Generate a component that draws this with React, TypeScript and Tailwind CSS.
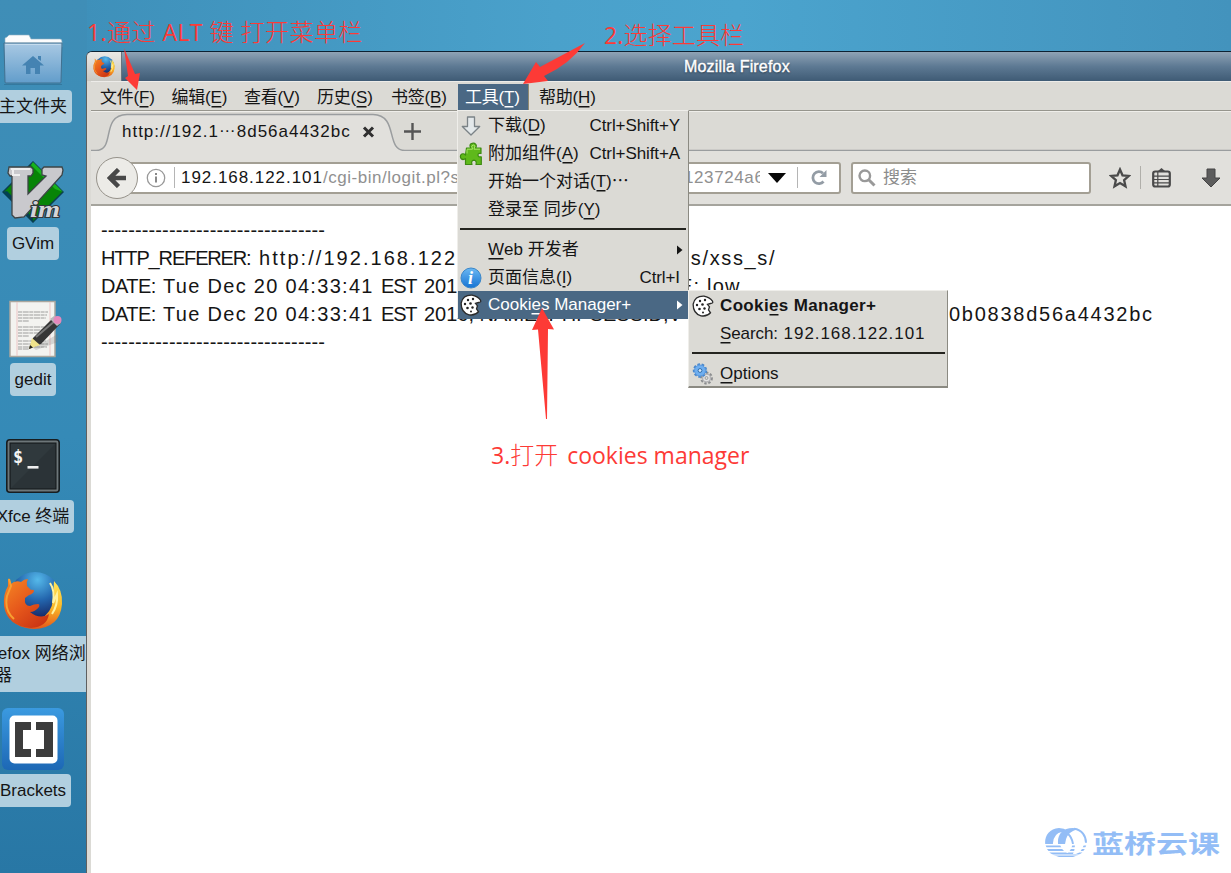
import React from "react";

const UI = "font-['Liberation_Sans','Noto_Sans_CJK_SC',sans-serif]";

/* ---------- drawings ---------- */

function FolderIcon() {
  return (
    <svg width="60" height="52" viewBox="0 0 60 52">
      <defs>
        <linearGradient id="folder" x1="0" y1="0" x2="0" y2="1">
          <stop offset="0" stopColor="#a9c9e3" />
          <stop offset="1" stopColor="#629dcb" />
        </linearGradient>
      </defs>
      <path d="M2 10V4l2-1 2-2h20l2 4h29q2 0 2 3v5z" fill="#fcfcfc" stroke="#8fb0c4" strokeWidth=".6" />
      <path d="M1 9h58l-1 39q0 1-1 1H3q-1 0-1-1z" fill="url(#folder)" stroke="#41708f" />
      <path d="M2.500 10.500h55" stroke="#c5dced" />
      <path d="M1 50.500h58" stroke="#2b6485" strokeOpacity=".5" />
      <path d="M30 22l11 9.500h-4V40h-5v-6h-4.500v6H23v-8.500h-4z M35 22h3v5l-3-2z" fill="#4583b2" />
    </svg>
  );
}

function VimIcon() {
  return (
    <svg width="62" height="62" viewBox="0 0 62 62">
      <path d="M31 1l30 30-30 30L1 31z" fill="#078407" stroke="#0b3f51" strokeWidth="1.500" />
      <path d="M31 1l30 30-8-3-24-24z" fill="#18b21d" />
      <path d="M1 31l30 30v-4L5 30z" fill="#034052" />
      <path d="M7 6h22l2 2v4l-2 3h-3v18l18-18-4-1v-6l2-2h18l1 3-1 5-38 42-9 1-3-3V15H8l-2-3z" fill="#c9c9cd" stroke="#3d4446" strokeWidth="1.300" />
      <path d="M9 8h19M11 9v5h7" stroke="#efeff0" strokeWidth="2" fill="none" />
      <text x="28" y="56" fontFamily="Liberation Serif, serif" fontStyle="italic" fontWeight="bold" fontSize="24" textLength="30" lengthAdjust="spacingAndGlyphs" fill="#d4d4d8" stroke="#30383b" strokeWidth="2.200" paintOrder="stroke">im</text>
    </svg>
  );
}

function GeditIcon() {
  const lines = [12, 15, 18, 21, 27, 30, 33, 36, 41, 44, 47, 49];
  return (
    <svg width="56" height="58" viewBox="0 0 56 58" className="translate-x-[2px]">
      <rect x="3" y="1.500" width="45" height="55" fill="#f3f3f0" stroke="#aaa79e" strokeWidth="1.500" />
      <path d="M10 2v54M43 2v54" stroke="#ecc5c5" />
      {lines.map((y, i) => (
        <path key={y} d={`M11 ${y}h${i % 4 === 3 ? 11 : 30 - (i % 3)}`} stroke="#9d9d9b" strokeWidth="1.200" strokeDasharray="4 .7 6 .6" />
      ))}
      <path d="M26 48l25-14v8l-22 8z" fill="#777" opacity=".25" />
      <path d="M22 49l4-11 21-21 7 6-20 21z" fill="#363636" />
      <path d="M29 37l20-17" stroke="#777" strokeWidth="2" />
      <path d="M22 49l3-11 8 7z" fill="#efe28b" />
      <path d="M22 49l1-4 3 2.500z" fill="#222" />
      <path d="M43 19l4-3 7 7-4 3z" fill="#b9b9bb" />
      <circle cx="50.500" cy="20" r="4" fill="#e489bd" />
    </svg>
  );
}

function TerminalIcon() {
  return (
    <svg width="54" height="54" viewBox="0 0 54 54">
      <rect x=".8" y=".8" width="52.400" height="52.400" rx="3" fill="#6d7679" stroke="#171d20" strokeWidth="1.600" />
      <rect x="4" y="4" width="46" height="46" fill="#2b3337" stroke="#14191b" />
      <path d="M5 49V5h44z" fill="#353f43" opacity=".5" />
      <text x="7" y="24" fontFamily="DejaVu Sans Mono, monospace" fontWeight="bold" fontSize="17" fill="#f4f4f4">$</text>
      <path d="M21.500 28.300h11" stroke="#eee" strokeWidth="2.600" />
    </svg>
  );
}

function FirefoxIcon({ size }: { size: number }) {
  return (
    <svg width={size} height={size} viewBox="0 0 60 60">
      <defs>
        <radialGradient id="globe" cx=".55" cy=".15" r=".8">
          <stop offset="0" stopColor="#55b9ea" />
          <stop offset=".5" stopColor="#2365ad" />
          <stop offset="1" stopColor="#141c57" />
        </radialGradient>
        <linearGradient id="fox" x1="0" y1="0" x2=".8" y2="1">
          <stop offset="0" stopColor="#f68a25" />
          <stop offset=".55" stopColor="#e5561b" />
          <stop offset="1" stopColor="#c93413" />
        </linearGradient>
        <linearGradient id="tail" x1="0" y1="0" x2="0" y2="1">
          <stop offset="0" stopColor="#ffe75c" />
          <stop offset=".55" stopColor="#fbb827" />
          <stop offset="1" stopColor="#e4571a" />
        </linearGradient>
      </defs>
      <circle cx="32" cy="27" r="26" fill="url(#globe)" />
      <path d="M51 10q9 9 8 23-2 24-28 25Q10 57 4 41q15 14 33 7 12-6 13-20z" fill="url(#tail)" />
      <path d="M47 12q5 7 3 20l4-9q1 11-5 20" stroke="#fff2a0" strokeWidth="2" fill="none" />
      <path d="M5 7l3 6q4-4 10-2 3-3 7-3-2 3-1 7l4 4q3-1 3 1-1 3-5 4l-4 3q-1 8 5 8 4-2 8-2 2 0 1 3-4 5-9 5 10 8 19 2-2 13-18 14Q4 55 1 35 0 23 5 15z" fill="url(#fox)" />
      <path d="M6 8l2 7-4 10q-3 14 7 23" stroke="#f7a031" strokeWidth="2" fill="none" />
    </svg>
  );
}

function BracketsIcon() {
  return (
    <svg width="64" height="64" viewBox="0 0 64 64">
      <defs>
        <linearGradient id="brk" x1="0" y1="0" x2="0" y2="1">
          <stop offset="0" stopColor="#3b9ae0" />
          <stop offset="1" stopColor="#1d68b5" />
        </linearGradient>
      </defs>
      <rect x="1" y="1" width="62" height="62" rx="6" fill="url(#brk)" />
      <rect x="8.500" y="8.500" width="48" height="48" rx="5" fill="#fff" />
      <path d="M14 15h16v8h-8v19h8v8H14zM35 15h17v35H35v-8h8V23h-8z" fill="#3c3c3c" />
    </svg>
  );
}

function Cookie() {
  return (
    <svg width="22" height="22" viewBox="0 0 22 22">
      <path d="M12 1.200Q3 .8 1.200 9 .8 18.500 9 20.800q6 1 9.500-3l-2-3 1-3-2-2.500 3-.8q3 0 2-2.300-3-4-8.500-5z" fill="#fff" stroke="#2b2b2b" strokeWidth="1.300" />
      <g fill="#222">
        <circle cx="8" cy="6" r="1.200" /><circle cx="13" cy="5" r="1.200" /><circle cx="5" cy="10" r="1.200" />
        <circle cx="10.500" cy="9.500" r="1.300" /><circle cx="7.500" cy="14" r="1.300" /><circle cx="12.500" cy="13.500" r="1.200" /><circle cx="11" cy="17.500" r="1" />
      </g>
    </svg>
  );
}

function DownloadArrow() {
  return (
    <svg width="22" height="22" viewBox="0 0 22 22">
      <path d="M7.500 2h7v9.500h5.200L11 20 2.300 11.500h5.200z" fill="#e3e8ea" stroke="#7b8387" strokeWidth="1.300" strokeLinejoin="round" />
    </svg>
  );
}

function Puzzle() {
  return (
    <svg width="24" height="24" viewBox="0 0 24 24">
      <path d="M7.500 6H12Q10 3.500 12 1.800q3-1.500 4.800.5Q18 4 16.500 6H22v5.500q-3-.7-3 1.500 0 2.500 3.300 1.800V22.500H17q1-4-2-4.300-3.300.3-2 4.300H6.500v-6q-2.500 2-4.500 0-1.500-3 .8-4.500 2-.8 3.700 1z" fill="#5fb91b" stroke="#3d8a12" strokeWidth="1.200" strokeLinejoin="round" />
      <path d="M8 7.200h5.500L12.700 4q1.500-2 3.300 0L15 7.200h6M8 7.500v4" stroke="#a8e566" fill="none" />
    </svg>
  );
}

function InfoIcon() {
  return (
    <svg width="22" height="22" viewBox="0 0 22 22">
      <defs>
        <linearGradient id="info" x1="0" y1="0" x2="0" y2="1">
          <stop offset="0" stopColor="#6bb8f2" />
          <stop offset="1" stopColor="#1573d4" />
        </linearGradient>
      </defs>
      <circle cx="11" cy="11" r="10" fill="url(#info)" stroke="#3b87c9" />
      <text x="8" y="17" fontFamily="Liberation Serif, serif" fontStyle="italic" fontWeight="bold" fontSize="18" fill="#fff">i</text>
    </svg>
  );
}

function Gears() {
  return (
    <svg width="22" height="22" viewBox="0 0 22 22">
      <circle cx="14.500" cy="15" r="4.800" fill="none" stroke="#8b8d8f" strokeWidth="3.200" strokeDasharray="2.100 1.500" />
      <circle cx="14.500" cy="15" r="4" fill="#e4e4e4" stroke="#b3b3b5" strokeWidth="1.500" />
      <circle cx="14.500" cy="15" r="1.500" fill="#dbdad5" stroke="#888" strokeWidth=".7" />
      <circle cx="8" cy="7.500" r="5.900" fill="none" stroke="#4a88cc" strokeWidth="2.600" strokeDasharray="2.500 1.600" />
      <circle cx="8" cy="7.500" r="5.500" fill="#6faff0" stroke="#5a98dd" />
      <circle cx="8" cy="7.500" r="1.900" fill="#dceaf8" stroke="#2e6cab" />
    </svg>
  );
}

/* ---------- desktop ---------- */

function Shortcut({ place, label, wide, children }: { place: string; label: string; wide?: string; children: React.ReactNode }) {
  return (
    <div className={`absolute flex w-[200px] flex-col items-center ${place}`}>
      {children}
      <span className={`${wide ?? "whitespace-nowrap rounded-[4px] px-[5px] leading-[33px]"} bg-[#b1cfdf] text-[#151515]`}>{label}</span>
    </div>
  );
}

/* ---------- menus ---------- */

function Key({ c }: { c: string }) {
  return <span className="inline-block leading-[17px] shadow-[0_2px_0_-0.5px_currentColor]">{c}</span>;
}

function Row({ icon, shortcut, active, arrow, className = "", children }: { icon?: React.ReactNode; shortcut?: string; active?: boolean; arrow?: boolean; className?: string; children: React.ReactNode }) {
  return (
    <div className={`flex h-7 items-center whitespace-pre pr-[8px] ${active ? "bg-[#4a6884] text-white" : "text-[#151515]"} ${className}`}>
      <span className="flex w-[30px] shrink-0 items-center pl-[2px]">{icon}</span>
      <span className="grow">{children}</span>
      {shortcut && <span className="tracking-[-0.1px]">{shortcut}</span>}
      {arrow && (
        <svg width="7" height="10" viewBox="0 0 7 10" className="mr-[-4px]">
          <path d="M0 .5L5.500 5 0 9.500z" fill="currentColor" />
        </svg>
      )}
    </div>
  );
}

function ToolsMenu() {
  return (
    <div className="absolute left-[457px] top-[110px] h-[209px] w-[232px] border border-l-[#efeeea] border-t-[#efeeea] border-r-[#8b8a82] border-b-[#8b8a82] bg-[#dbdad5] pt-[1px]">
      <Row icon={<DownloadArrow />} shortcut="Ctrl+Shift+Y">下载(<Key c="D" />)</Row>
      <Row icon={<span className="-ml-px"><Puzzle /></span>} shortcut="Ctrl+Shift+A">附加组件(<Key c="A" />)</Row>
      <Row>开始一个对话(<Key c="T" />)<span className="font-['Noto_Sans_CJK_SC'] leading-[1px]">…</span></Row>
      <Row>登录至 同步(<Key c="Y" />)</Row>
      <div className="mx-[2px] mt-[4px] mb-[6px] h-[2px] bg-[#24241f]" />
      <Row arrow><Key c="W" />eb 开发者</Row>
      <Row icon={<InfoIcon />} shortcut="Ctrl+I" className="h-[27px]">页面信息(<Key c="I" />)</Row>
      <Row active arrow icon={<Cookie />}>Cooki<Key c="e" />s Manager+</Row>
    </div>
  );
}

function CookiesSubmenu() {
  return (
    <div className="absolute left-[688px] top-[290px] h-[98px] w-[260px] border border-b-2 border-l-[#efeeea] border-t-[#efeeea] border-r-[#8b8a82] border-b-[#8b8a82] bg-[#dbdad5] pt-px pl-px">
      <Row icon={<Cookie />} className="font-bold tracking-[0.35px]">Cooki<Key c="e" />s Manager+</Row>
      <Row><span className="tracking-[-0.1px]"><Key c="S" />earch:</span><span className="tracking-[0.95px]"> 192.168.122.101</span></Row>
      <div className="mx-[2px] mt-[4px] mb-[6px] h-[2px] bg-[#24241f]" />
      <Row icon={<Gears />}><Key c="O" />ptions</Row>
    </div>
  );
}

/* ---------- browser window ---------- */

const menus = [
  { t: "文件", k: "F", w: "w-[72px] pl-[8px]" },
  { t: "编辑", k: "E", w: "w-[72px] pl-[7.5px]" },
  { t: "查看", k: "V", w: "w-[73px] pl-[8px]" },
  { t: "历史", k: "S", w: "w-[74px] pl-[8px]" },
  { t: "书签", k: "B", w: "w-[75px] pl-[8px]" },
  { t: "工具", k: "T", w: "w-[71px] pl-[7px]", on: true },
  { t: "帮助", k: "H", w: "w-[73px] pl-[10px]" },
];

function BrowserWindow() {
  return (
    <div className="absolute left-[86px] top-[51px] flex h-[822px] w-[1145px] flex-col overflow-hidden rounded-tl-[6px] border-l border-t border-l-[#5f6060] border-t-[#0d2233] bg-[#dbdad5]">
      <div className="flex h-[29px] shrink-0 bg-linear-to-b from-[#8fa3b5] via-[#5d7993] to-[#3f5b75]">
        <div className="flex w-[35px] items-center justify-center border-r border-[#68747e] bg-linear-to-b from-[#e9e8e5] to-[#c9c8c3]">
          <FirefoxIcon size={22} />
        </div>
        <div className="flex grow items-center pl-[562px]">
          <span className="whitespace-nowrap text-[16px] tracking-[0.18px] text-white [text-shadow:0_1px_2px_#1c2d3d] [-webkit-text-stroke:0.4px_white]">Mozilla Firefox</span>
        </div>
      </div>

      <div className="flex grow flex-col pl-[4px]">
        <div className="flex h-[30px] shrink-0 items-stretch border-b border-[#96958d] border-t border-t-[#edece9] pl-[1px] pt-[2px]">
          {menus.map((m) => (
            <div key={m.k} className={`flex items-center whitespace-nowrap pt-px tracking-[-0.2px] ${m.w} ${m.on ? "border-r border-[#8f8a72] bg-[#4a6884] text-white" : "text-[#151515]"}`}>
              <span>{m.t}(<Key c={m.k} />)</span>
            </div>
          ))}
        </div>

        <div className="relative flex h-[40px] shrink-0 items-center border-t border-[#efeeea] pl-[31px]">
          <svg className="absolute left-0 top-0" width="1140" height="39" viewBox="0 0 1140 39">
            <path d="M0 38.500h5C25 38.500 9 3 36 2.500h246C308 3 294 38.500 314 38.500h826V40H0z" fill="#e1e0dc" />
            <path d="M0 38.500h5C25 38.500 9 3 36 2.500h246C308 3 294 38.500 314 38.500h826" fill="none" stroke="#9a9d9f" strokeWidth="1.500" />
          </svg>
          <span className="relative w-[230px] whitespace-nowrap tracking-[0.98px] text-[#151515]">http://192.1<span className="inline-block -translate-y-[5px]">…</span>8d56a4432bc</span>
          <svg className="relative ml-[10px]" width="13" height="12" viewBox="0 0 13 12">
            <path d="M2 1.500l9 9M11 1.500l-9 9" stroke="#2f2f2f" strokeWidth="3" />
          </svg>
          <svg className="relative ml-[29px]" width="17" height="17" viewBox="0 0 17 17">
            <path d="M8.500 0v17M0 8.500h17" stroke="#555" strokeWidth="2.400" />
          </svg>
        </div>

        <div className="flex h-[55px] shrink-0 items-center border-b-2 border-[#a5a49d] bg-[#e1e0dc] pl-[5px]">
          <div className="z-10 flex h-[42px] w-[42px] shrink-0 items-center justify-center rounded-full border-[1.500px] border-[#96928a] bg-[#ecebe7]">
            <svg width="20" height="20" viewBox="0 0 20 20">
              <path d="M11.500 1.500L3 10l8.500 8.500M4 10h15" fill="none" stroke="#484848" strokeWidth="4.500" />
            </svg>
          </div>
          <div className="ml-[-14px] flex h-[32px] w-[717px] shrink-0 items-center rounded-[3px] border-2 border-[#a39f94] bg-white pl-[20px]">
            <svg className="shrink-0" width="20" height="20" viewBox="0 0 20 20">
              <circle cx="10" cy="10" r="8.700" fill="none" stroke="#999" strokeWidth="1.300" />
              <path d="M10 8.500v6M10 5v2" stroke="#888" strokeWidth="2" />
            </svg>
            <span className="ml-[8px] h-[21px] w-px bg-[#b5b5b5]" />
            <span className="ml-[6px] w-[142px] shrink-0 whitespace-nowrap tracking-[0.95px] text-[#151515]">192.168.122.101</span>
            <span className="w-[361px] shrink-0 whitespace-nowrap tracking-[0.52px] text-[#909090]">/cgi-bin/logit.pl?s</span>
            <span className="w-[76px] shrink-0 overflow-hidden whitespace-nowrap tracking-[0.6px] text-[#909090]">123724a6</span>
            <svg className="ml-[8px] shrink-0" width="18" height="10" viewBox="0 0 18 10"><path d="M0 0h18L9 10z" fill="#080808" /></svg>
            <span className="ml-[11px] h-[21px] w-px bg-[#b5b5b5]" />
            <svg className="ml-[13px] shrink-0" width="17" height="17" viewBox="0 0 17 17">
              <path d="M12.500 12.500A6 6 0 1 1 12 4.300" fill="none" stroke="#939ca5" strokeWidth="2.800" />
              <path d="M15.500 1v7H8.500z" fill="#939ca5" />
            </svg>
          </div>
          <div className="ml-[10px] flex h-[32px] w-[240px] shrink-0 items-center rounded-[3px] border-2 border-[#a39f94] bg-white pl-[5px] text-[#8c8c8c]">
            <svg width="18" height="18" viewBox="0 0 18 18">
              <circle cx="6.800" cy="6.800" r="5.300" fill="none" stroke="#999" strokeWidth="2.400" />
              <path d="M10.500 10.500l6 6" stroke="#999" strokeWidth="3" />
            </svg>
            <span className="ml-[7px] pt-px">搜索</span>
          </div>
          <svg className="ml-[18px] shrink-0" width="22" height="22" viewBox="0 0 22 22">
            <path d="M11 2.500l2.500 5.800 6.300.6-4.700 4.200 1.400 6.200L11 16l-5.500 3.300 1.400-6.200L2.200 8.900l6.300-.6z" fill="none" stroke="#4a4a4a" strokeWidth="2.300" />
          </svg>
          <span className="ml-[9px] h-[23px] w-px bg-[#b0afaa]" />
          <svg className="ml-[11px] shrink-0" width="19" height="20" viewBox="0 0 19 20">
            <path d="M6 3L9.500 0 13 3z" fill="#4a4a4a" />
            <rect x="1.200" y="3.500" width="16.600" height="15" rx="2" fill="none" stroke="#4a4a4a" strokeWidth="2.200" />
            <path d="M2 8.200h15M2 11.500h15M2 14.800h15" stroke="#4a4a4a" strokeWidth="1.200" />
            <path d="M5.800 4v14" stroke="#4a4a4a" strokeWidth="1.200" />
          </svg>
          <svg className="ml-[30px] shrink-0" width="20" height="20" viewBox="0 0 20 20">
            <path d="M6 1h8v9h5l-9 9-9-9h5z" fill="#5c5c5c" stroke="#444" />
          </svg>
        </div>

        <div className="grow whitespace-pre bg-white pl-[10px] pt-[10px] text-[20px] leading-[28px] text-[#151515]">
          <div className="h-7 tracking-[0.13px]">---------------------------------</div>
          <div className="flex h-7">
            <span className="w-[158px] tracking-[-1.15px]">HTTP_REFERER:</span>
            <span className="w-[419px] tracking-[2.05px]">http://192.168.122</span>
            <span className="tracking-[1.65px]">es/xss_s/</span>
          </div>
          <div className="flex h-7">
            <span className="w-[62px] tracking-[-0.5px]">DATE:</span>
            <span className="w-[218px] tracking-[1.3px]">Tue Dec 20 04:33:41</span>
            <span className="w-[43px] tracking-[-1.2px]">EST</span>
            <span className="w-[255px]">201</span>
            <span className="tracking-[1.2px]">E: low</span>
          </div>
          <div className="flex h-7">
            <span className="w-[62px] tracking-[-0.5px]">DATE:</span>
            <span className="w-[218px] tracking-[1.3px]">Tue Dec 20 04:33:41</span>
            <span className="w-[43px] tracking-[-1.2px]">EST</span>
            <span className="w-[525px]">2016, NAME: PHPSESSID,V</span>
            <span className="tracking-[1.75px]">0b0838d56a4432bc</span>
          </div>
          <div className="h-7 tracking-[0.13px]">---------------------------------</div>
        </div>
      </div>
    </div>
  );
}

/* ---------- annotations ---------- */

const NOTE = "absolute whitespace-pre font-['Open_Sans','Noto_Sans_CJK_SC',sans-serif] font-normal text-[#fd3a36] leading-[32px]";

function Annotations() {
  return (
    <>
      <svg className="absolute left-0 top-0" width="1231" height="873" viewBox="0 0 1231 873" fill="#fd3a36">
        <path d="M124 48l11 26 5-1-3 17-12-12 3-2z" />
        <path d="M585 43L540 67l-4-5-13 22 25-3-4-5q26-12 41-33z" />
        <path d="M542 308l-10 22 6-.5 8 89.500h1l1-90 6 .5z" />
      </svg>
      <div className={`${NOTE} left-[87px] top-[16px] text-[23px] tracking-[0.45px]`}>1.<span className="text-[24px] font-light">通过</span> ALT <span className="text-[24px] font-light">键 打开菜单栏</span></div>
      <div className={`${NOTE} left-[604px] top-[19px] text-[23px] tracking-[0.15px]`}>2.<span className="text-[24px] font-light">选择工具栏</span></div>
      <div className={`${NOTE} left-[491px] top-[439px] text-[23px]`}>3.<span className="text-[24px] font-light">打开</span><span className="pl-[3px]"> cookies manager</span></div>
    </>
  );
}

function Watermark() {
  return (
    <div className="absolute left-[1044px] top-[825px] flex items-center text-[#93bdf6]">
      <svg width="44" height="34" viewBox="0 0 44 34" fill="currentColor">
        <defs>
          <clipPath id="above"><path d="M0 0h44v19H0z" /></clipPath>
          <clipPath id="water"><path d="M0 20.500h44v1.800H0zM0 24h44v2H0zM0 27.500h44v2H0zM0 30.500h44v2H0z" /></clipPath>
        </defs>
        <g clipPath="url(#above)">
          <path d="M15 3C-4 4-3 31 15 32q-7-6-6-14Q10 8 18 7q3 1 6-1-4-3-9-3z" />
          <path d="M29 3C15 3 11 15 16 25h5Q20 10 29 6q3-1 3-2.500z" />
          <path d="M23 8q5 4 6 11M30 3.800c8 1 12 7 12 14" fill="none" stroke="currentColor" strokeWidth="2" />
        </g>
        <g clipPath="url(#water)">
          <path d="M1.500 19q1 10 13.500 13h14q12-3 13.500-13h-2.500q-2 8-8 10h-3q2-4 2-10h-2.500q-1 6-5 9Q17 25 16 19z" />
        </g>
      </svg>
      <span className="ml-[4px] inline-block origin-left scale-x-[1.28] whitespace-nowrap font-['Noto_Sans_CJK_SC',sans-serif] text-[25px] font-bold leading-[34px]">蓝桥云课</span>
    </div>
  );
}

export default function App() {
  return (
    <div className={`relative h-[873px] w-[1231px] overflow-hidden bg-[linear-gradient(90deg,#3c8db7_0%,#4aa1cb_45%,#4ba4ce_60%,#4393bd_100%)] text-[17px] leading-[22px] ${UI}`}>
      <div className="absolute left-0 top-0 h-full w-[87px] bg-linear-to-b from-[#3f8eb7] via-[#358ab7] to-[#2877a5]" />
      <Shortcut place="left-[-67px] top-[34px] gap-[4px]" label="主文件夹"><FolderIcon /></Shortcut>
      <Shortcut place="left-[-67px] top-[161px] gap-[4px]" label="GVim"><VimIcon /></Shortcut>
      <Shortcut place="left-[-67px] top-[300px] gap-[5px]" label="gedit"><GeditIcon /></Shortcut>
      <Shortcut place="left-[-67px] top-[439px] gap-[7px]" label="Xfce 终端"><TerminalIcon /></Shortcut>
      <Shortcut place="left-[-67px] top-[571px] gap-[5px]" label="Firefox 网络浏览器" wide="w-[134px] break-all pb-[5px] pt-[7px] pl-[12px] pr-0 leading-[22px]"><FirefoxIcon size={60} /></Shortcut>
      <Shortcut place="left-[-67px] top-[707px] gap-[3px]" label="Brackets"><BracketsIcon /></Shortcut>
      <BrowserWindow />
      <ToolsMenu />
      <CookiesSubmenu />
      <Annotations />
      <Watermark />
    </div>
  );
}
